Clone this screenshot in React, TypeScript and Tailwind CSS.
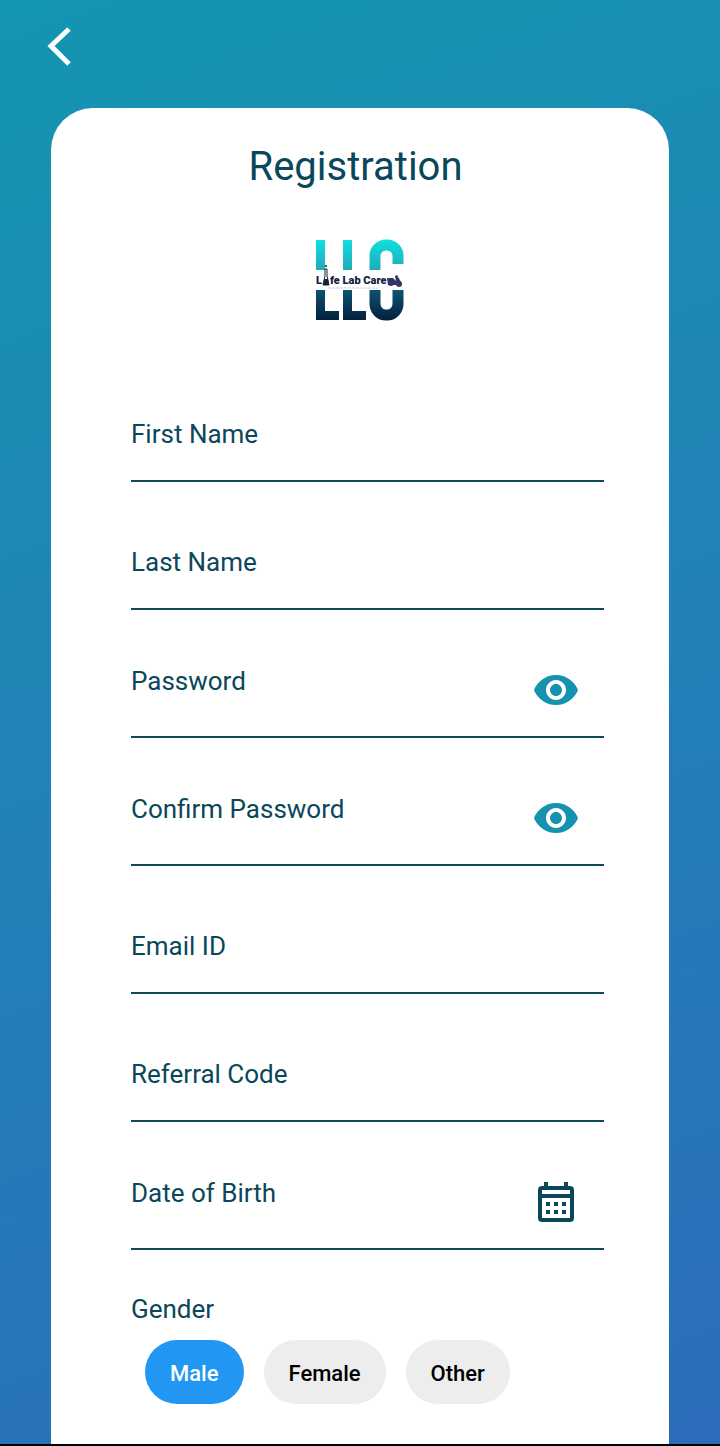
import React, { useState } from 'react';

interface FieldProps {
  id: string;
  label: string;
  type?: string;
  action?: React.ReactNode;
}

const EyeIcon = () => (
  <svg viewBox="0 0 24 24" className="w-12 h-12" fill="currentColor" aria-hidden="true">
    <path d="M12 4.5C7 4.5 2.73 7.61 1 12c1.73 4.39 6 7.5 11 7.5s9.27-3.11 11-7.5c-1.73-4.39-6-7.5-11-7.5zM12 17c-2.76 0-5-2.24-5-5s2.24-5 5-5 5 2.24 5 5-2.24 5-5 5zm0-8c-1.66 0-3 1.34-3 3s1.34 3 3 3 3-1.34 3-3-1.34-3-3-3z" />
  </svg>
);

const CalendarIcon = () => (
  <svg viewBox="0 0 48 48" className="w-12 h-12" fill="currentColor" aria-hidden="true">
    <rect x="8" y="10" width="32" height="32" rx="2" fill="none" stroke="currentColor" strokeWidth="4" />
    <path d="M12 4h4v6h-4zM32 4h4v6h-4zM8 16h32v4H8z" />
    <path d="M14 24h4v4h-4zM22 24h4v4h-4zM30 24h4v4h-4zM14 32h4v4h-4zM22 32h4v4h-4zM30 32h4v4h-4z" />
  </svg>
);

const Logo = () => (
  <svg viewBox="0 0 120 110" className="w-30 h-28" role="img" aria-label="Life Lab Care">
    <defs>
      <linearGradient id="logo-top" gradientUnits="userSpaceOnUse" x1="0" y1="15" x2="0" y2="46">
        <stop offset="0" stopColor="#0fdfe0" />
        <stop offset="1" stopColor="#20a9b6" />
      </linearGradient>
      <linearGradient id="logo-bottom" gradientUnits="userSpaceOnUse" x1="0" y1="64" x2="0" y2="95">
        <stop offset="0" stopColor="#0c5574" />
        <stop offset="1" stopColor="#06203c" />
      </linearGradient>
      <clipPath id="arch-top">
        <rect x="68" y="10" width="24" height="35" />
        <rect x="92" y="10" width="12" height="29" />
      </clipPath>
      <clipPath id="arch-bottom">
        <rect x="68" y="65" width="38" height="32" />
      </clipPath>
    </defs>
    <g fill="url(#logo-top)">
      <rect x="16" y="15" width="9" height="30" />
      <rect x="43" y="15" width="9" height="30" />
    </g>
    <g fill="url(#logo-bottom)">
      <rect x="16" y="65" width="9" height="30" />
      <rect x="16" y="86" width="23" height="9" />
      <rect x="43" y="65" width="9" height="30" />
      <rect x="43" y="86" width="23" height="9" />
    </g>
    <rect x="75" y="20" width="23" height="70" rx="11" fill="none" stroke="url(#logo-top)" strokeWidth="11" clipPath="url(#arch-top)" />
    <rect x="75" y="20" width="23" height="70" rx="11" fill="none" stroke="url(#logo-bottom)" strokeWidth="11" clipPath="url(#arch-bottom)" />
    <g fill="#14213f" fontFamily="'Roboto', sans-serif" fontWeight="900" fontSize="11">
      <text x="16" y="59">L</text>
      <text x="30" y="59">fe Lab Care</text>
    </g>
    {/* flask standing in for the "i" */}
    <path d="M25 44h2v7l2 9h-6l2-9z" fill="#fff" stroke="#14213f" strokeWidth="1" />
    <path d="M24 54h4l1 6h-6z" fill="#14213f" />
    <circle cx="26" cy="41" r="1" fill="#14213f" />
    {/* scooter */}
    <g fill="#35335f">
      <circle cx="91" cy="58" r="3" />
      <circle cx="99" cy="59" r="3" />
      <path d="M87 53h6l3 3-1-5 2-1 4 7-5 3h-8z" />
    </g>
    <path d="M28 63h50" stroke="#c9cdd5" strokeWidth="1" strokeDasharray="3 1" />
  </svg>
);

const Field: React.FC<FieldProps> = ({ id, label, type = 'text', action }) => (
  <div className="flex h-32 items-end border-b-2 border-[#12495b]">
    <div className="flex min-w-0 flex-1 flex-col">
      <label htmlFor={id} className="text-[26px] leading-8">{label}</label>
      <input
        id={id}
        type={type}
        className={`w-full bg-transparent text-xl outline-none ${action ? 'h-[39px]' : 'h-[30px]'}`}
      />
    </div>
    {action}
  </div>
);

const PasswordField: React.FC<FieldProps> = ({ id, label }) => {
  const [visible, setVisible] = useState(false);

  return (
    <Field
      id={id}
      label={label}
      type={visible ? 'text' : 'password'}
      action={
        <button
          type="button"
          aria-label={`Show ${label}`}
          onClick={() => setVisible(!visible)}
          className="mr-6 mb-[22px] text-[#1593ae]"
        >
          <EyeIcon />
        </button>
      }
    />
  );
};

const genders = ['Male', 'Female', 'Other'];

const App: React.FC = () => {
  const [gender, setGender] = useState('Male');

  return (
    <main className="flex min-h-screen flex-col border-b-2 border-black bg-linear-160 from-[#1395b1] to-[#2b6cba] font-['Roboto',sans-serif] text-[#0b475a]">
      <header className="flex h-27 items-start px-9 pt-5">
        <button type="button" aria-label="Back" className="text-white">
          <svg viewBox="0 0 48 52" className="w-12 h-13" fill="none" stroke="currentColor" strokeWidth="5" aria-hidden="true">
            <path d="M33 9L15 26l18 18" />
          </svg>
        </button>
      </header>

      <form className="mx-[51px] flex flex-1 flex-col rounded-t-[42px] bg-white pt-8 pr-[65px] pb-10 pl-20">
        <h1 className="-ml-6 text-center text-[40px] leading-[54px]">Registration</h1>
        <div className="mt-[30px] -ml-4 flex justify-center">
          <Logo />
        </div>

        <div className="mt-[18px]">
          <Field id="first-name" label="First Name" />
          <Field id="last-name" label="Last Name" />
          <PasswordField id="password" label="Password" />
          <PasswordField id="confirm-password" label="Confirm Password" />
          <Field id="email" label="Email ID" type="email" />
          <Field id="referral-code" label="Referral Code" />
          <Field
            id="birth-date"
            label="Date of Birth"
            action={
              <button type="button" aria-label="Choose date" className="mr-6 mb-[22px]">
                <CalendarIcon />
              </button>
            }
          />
        </div>

        <fieldset className="mt-[43px]">
          <legend className="text-[26px] leading-8">Gender</legend>
          <div className="mt-[15px] ml-[14px] flex gap-5">
            {genders.map((option) => (
              <label
                key={option}
                className={`flex h-16 cursor-pointer items-center rounded-full px-[25px] pt-0.5 text-[22px] font-medium ${
                  gender === option ? 'bg-[#2196f3] text-white' : 'bg-[#ededed] text-black'
                }`}
              >
                <input
                  type="radio"
                  name="gender"
                  value={option}
                  checked={gender === option}
                  onChange={() => setGender(option)}
                  className="sr-only"
                />
                {option}
              </label>
            ))}
          </div>
        </fieldset>
      </form>
    </main>
  );
};

export default App;
